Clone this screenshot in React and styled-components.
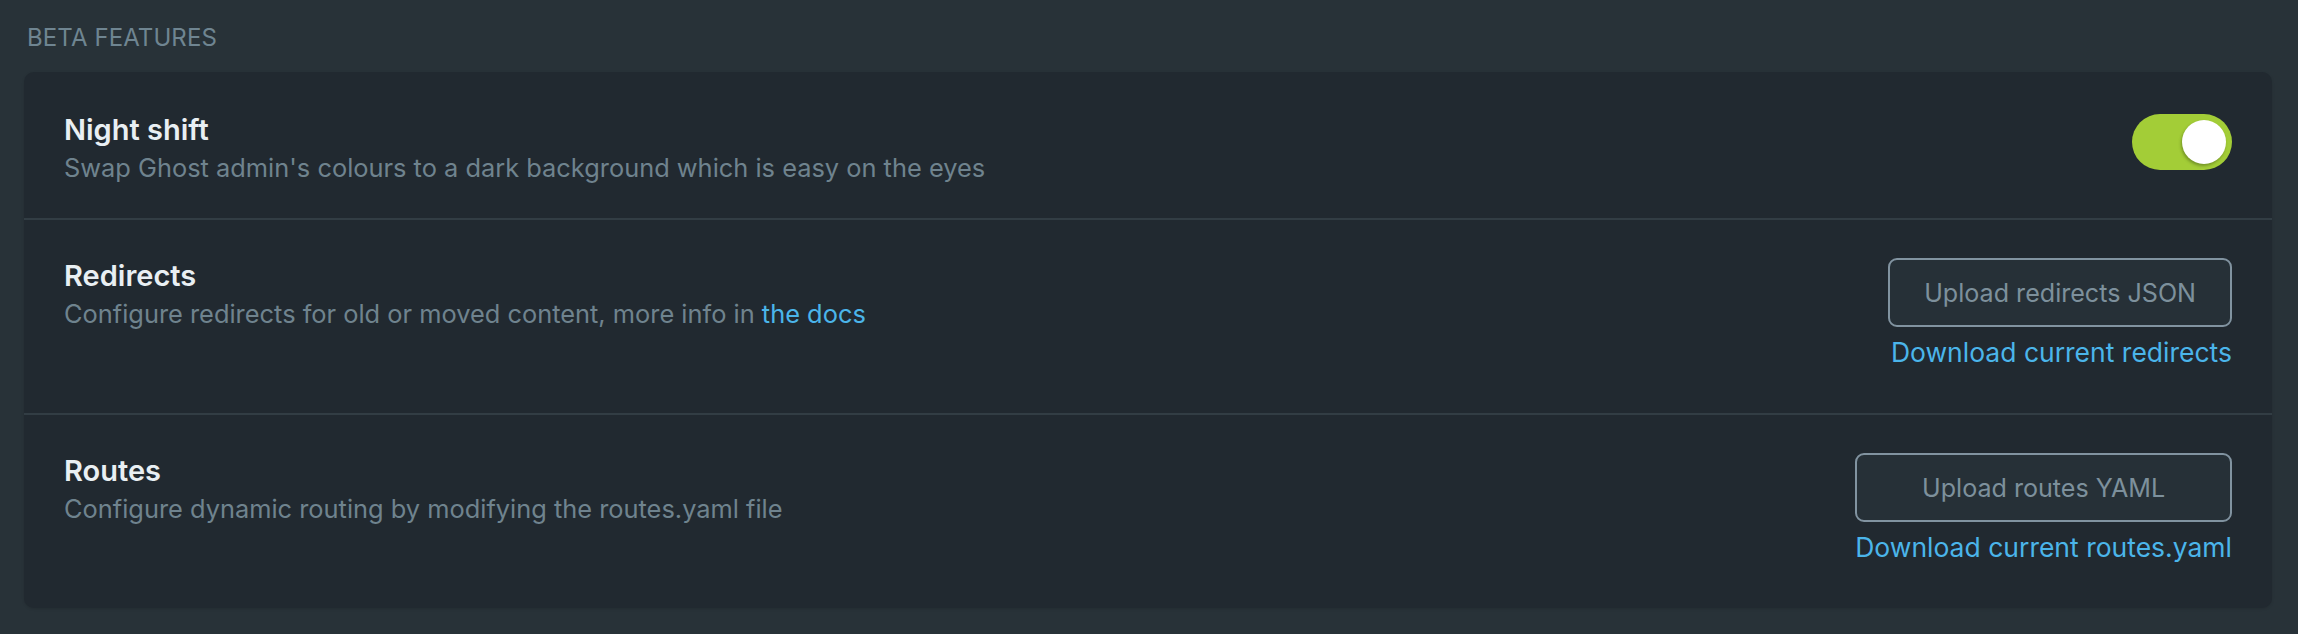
import React from 'react';
import styled, { createGlobalStyle } from 'styled-components';

const Global = createGlobalStyle`
  html, body {
    margin: 0;
    padding: 0;
    background: #283238;
  }
  body {
    font-family: Inter, "Noto Sans", sans-serif;
    -webkit-font-smoothing: antialiased;
  }
`

const Page = styled.div`
  padding: 23px 26px 30px 24px;
`

const Label = styled.h4`
  margin: 0 0 19px 3px;
  font-size: 24px;
  line-height: 30px;
  font-weight: 400;
  letter-spacing: 0.1px;
  text-transform: uppercase;
  color: #6f8591;
`

const Card = styled.div`
  background: #212930;
  border-radius: 10px;
  box-shadow: 0 1px 3px rgba(0, 0, 0, 0.12);
  overflow: hidden;
`

const Row = styled.div`
  display: flex;
  justify-content: space-between;
  align-items: flex-start;
  padding: ${p => (p.first ? '39px 40px 32px' : '37px 40px 43px')};
  border-top: ${p => (p.first ? 'none' : '2px solid #323d44')};
`

const Text = styled.div`
  display: flex;
  flex-direction: column;
`

const Title = styled.div`
  font-size: 29px;
  line-height: 38px;
  font-weight: 600;
  color: #e9eff3;
`

const Desc = styled.div`
  font-size: 25.4px;
  line-height: 37px;
  color: #6f838e;
`

const Link = styled.a`
  color: #4bb5ea;
  text-decoration: none;
  cursor: pointer;
`

const Actions = styled.div`
  display: flex;
  flex-direction: column;
  align-items: stretch;
  margin-top: 1px;
`

const Button = styled.button`
  height: 69px;
  padding: 0 34px;
  border: 2px solid #8193a0;
  border-radius: 9px;
  background: #263037;
  color: #7d909c;
  font-family: inherit;
  font-size: 25.1px;
  white-space: nowrap;
  cursor: pointer;
`

const ActionLink = styled(Link)`
  margin-top: 7px;
  font-size: 26.5px;
  line-height: 36px;
  text-align: right;
  white-space: nowrap;
`

const Toggle = styled.div`
  position: relative;
  margin-top: 3px;
  width: 100px;
  height: 56px;
  border-radius: 28px;
  background: #a3cd37;
  flex-shrink: 0;
`

const Knob = styled.span`
  position: absolute;
  top: 6px;
  right: 6px;
  width: 44px;
  height: 44px;
  border-radius: 50%;
  background: #fff;
  box-shadow: -1px 2px 3px rgba(60, 80, 20, 0.45);
`

const App = () => {
  return (
    <>
      <Global />
      <Page>
        <Label>Beta features</Label>
        <Card>
          <Row first>
            <Text>
              <Title>Night shift</Title>
              <Desc>Swap Ghost admin's colours to a dark background which is easy on the eyes</Desc>
            </Text>
            <Toggle>
              <Knob />
            </Toggle>
          </Row>

          <Row>
            <Text>
              <Title>Redirects</Title>
              <Desc>
                Configure redirects for old or moved content, more info in <Link>the docs</Link>
              </Desc>
            </Text>
            <Actions>
              <Button>Upload redirects JSON</Button>
              <ActionLink>Download current redirects</ActionLink>
            </Actions>
          </Row>

          <Row>
            <Text>
              <Title>Routes</Title>
              <Desc>Configure dynamic routing by modifying the routes.yaml file</Desc>
            </Text>
            <Actions>
              <Button>Upload routes YAML</Button>
              <ActionLink>Download current routes.yaml</ActionLink>
            </Actions>
          </Row>
        </Card>
      </Page>
    </>
  )
}

export default App;
